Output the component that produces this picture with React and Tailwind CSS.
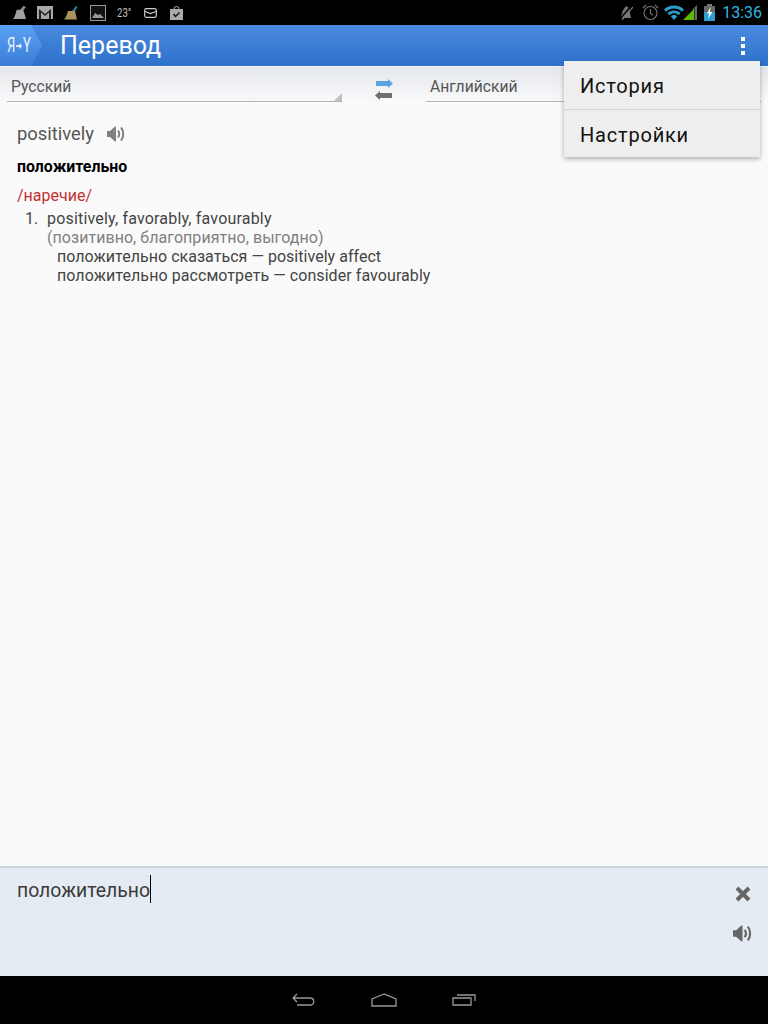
import React from 'react';

function Speaker({ className }) {
  return (
    <svg viewBox="0 0 18 16" className={className} fill="none">
      <path d="M0 5h3l5-4.500h1v15H8L3 11H0z" fill="currentColor" />
      <path d="M11 4.500c1.500 2 1.500 5 0 7" stroke="currentColor" strokeWidth="2" />
      <path d="M14 1.500c3 3.500 3 9.500 0 13" stroke="currentColor" strokeWidth="2" />
    </svg>
  );
}

function StatusBar() {
  return (
    <div className="h-[25px] bg-black flex items-center justify-between shrink-0">
      <div className="flex items-center">
        {/* broom gris */}
        <svg viewBox="0 0 16 16" className="w-[15px] h-[15px] ml-[12px]">
          <path d="M8 6l4-5 3 1-4 5z" fill="#8a8a8a" />
          <path d="M5 5h7l3 10H1c2-2 3-6 4-10z" fill="#a0a0a0" />
        </svg>
        {/* gmail */}
        <svg viewBox="0 0 16 13" className="w-[16px] h-[13px] ml-[10px]">
          <rect width="16" height="13" fill="#a8a8a8" />
          <path d="M2 13V3l6 5 6-5v10h-2V6.500L8 10 4 6.500V13z" fill="#222" />
        </svg>
        {/* broom */}
        <svg viewBox="0 0 16 16" className="w-[16px] h-[16px] ml-[10px]">
          <path d="M9 6l4-5 1.500 1-3 5z" fill="#2f7fa8" />
          <path d="M5 6h7l2 8.500H1c2-2 3-5 4-8.500z" fill="#a8935a" />
        </svg>
        {/* image */}
        <svg viewBox="0 0 16 16" className="w-[16px] h-[16px] ml-[11px]">
          <rect x="0.500" y="0.500" width="15" height="15" fill="#111" stroke="#999" />
          <path d="M2 13l3-5 3 2 2-1 4 4z" fill="#999" />
        </svg>
        <span className="ml-[11px] w-[15px] text-[12px] leading-none text-[#bbbbbb] scale-x-[0.8] origin-left whitespace-nowrap">23°</span>
        {/* inbox */}
        <svg viewBox="0 0 13 10" className="w-[13px] h-[10px] ml-[12px]" fill="none" stroke="#cccccc" strokeWidth="1.200">
          <rect x="0.700" y="0.700" width="11.600" height="8.600" rx="1.500" />
          <path d="M1 3.500l5.500 2 5.500-2" />
        </svg>
        {/* market */}
        <svg viewBox="0 0 13 14" className="w-[13px] h-[14px] ml-[13px]">
          <path d="M4 4V2.500a2.500 2 0 015 0V4" fill="none" stroke="#aaaaaa" />
          <rect y="3" width="13" height="11" fill="#aaaaaa" />
          <path d="M3.500 8l2 2.500 4-4" fill="none" stroke="#111" strokeWidth="1.500" />
        </svg>
      </div>
      <div className="flex items-center">
        {/* mute */}
        <svg viewBox="0 0 13 15" className="w-[13px] h-[15px]">
          <path d="M1 12l1.500-6L6 1l3 2 2 10H1z" fill="#777" />
          <path d="M0 14L12 0" stroke="#000" strokeWidth="1.500" />
          <path d="M2 15L13 2" stroke="#777" strokeWidth="1.200" />
        </svg>
        {/* alarm */}
        <svg viewBox="0 0 17 17" className="w-[17px] h-[17px] ml-[9px]" fill="none" stroke="#777" strokeWidth="1.100">
          <circle cx="8.500" cy="9" r="6.500" />
          <path d="M8.500 5v4.500l2.500 1.500M1 4l3-3M16 4l-3-3" />
        </svg>
        {/* wifi */}
        <svg viewBox="0 0 20 15" className="w-[20px] h-[15px] ml-[5px]">
          <path d="M0 4.500C5-1 15-1 20 4.500l-2 2.300C13.500 2.500 6.500 2.500 2 6.800z" fill="#2aa0cf" />
          <path d="M3.500 8C7 4.500 13 4.500 16.500 8l-2 2.200c-2.500-2.500-6.500-2.500-9 0z" fill="#2aa0cf" />
          <path d="M6.800 11.300c1.800-1.700 4.600-1.700 6.400 0L10 15z" fill="#2aa0cf" />
        </svg>
        {/* signal */}
        <svg viewBox="0 0 15 15" className="w-[15px] h-[15px] ml-[-1px]">
          <path d="M0 15L10 5v10z" fill="#5fb800" />
          <path d="M10 4l1-1v12h-1z" fill="#5fb800" />
          <path d="M11.500 2.500L14 0v15h-2.500z" fill="#666" />
        </svg>
        {/* battery */}
        <svg viewBox="0 0 11 17" className="w-[11px] h-[17px] ml-[6px]">
          <rect x="3" width="5" height="2" fill="#777" />
          <rect y="2" width="11" height="15" fill="#666" />
          <rect y="8" width="11" height="9" fill="#2a9fd0" />
          <path d="M6.500 3L3 9.500h2.200L4 15l4.500-7H6z" fill="#fff" />
        </svg>
        <span className="ml-[7px] mr-[6px] text-[16px] leading-none text-[#33b5e5]">13:36</span>
      </div>
    </div>
  );
}

function ActionBar() {
  return (
    <div className="h-[41px] shrink-0 flex items-center bg-gradient-to-b from-[#4b8ade] to-[#2c71cb] border-b border-[#f4f6f9] box-content">
      <div className="relative w-[42px] h-[41px] shrink-0">
        <svg viewBox="0 0 42 41" className="w-[42px] h-[41px]">
          <defs>
            <linearGradient id="logoFill" x1="0" y1="0" x2="0" y2="1">
              <stop offset="0" stopColor="#5aa2f5" />
              <stop offset="1" stopColor="#3a7dd6" />
            </linearGradient>
          </defs>
          <path d="M0 0h31l11 20.500L31 41H0z" fill="url(#logoFill)" />
        </svg>
        <div className="absolute left-[7px] top-[9px] flex items-center text-white/90 text-[20px] leading-[23px]">
          <span className="w-[8px] scale-x-[0.65] origin-left">Я</span>
          <svg viewBox="0 0 6 6" className="w-[6px] h-[6px] mx-[1px]">
            <path d="M0 2.200h3.500V0L6 3 3.500 6V3.800H0z" fill="#ffffff" />
          </svg>
          <span className="w-[8px] scale-x-[0.65] origin-left">Y</span>
        </div>
      </div>
      <span className="ml-[18px] text-white text-[25px]">Перевод</span>
      <div className="ml-auto mr-[23px] flex flex-col gap-[3px]">
        <div className="w-[4px] h-[4px] bg-white" />
        <div className="w-[4px] h-[4px] bg-white" />
        <div className="w-[4px] h-[4px] bg-white" />
      </div>
    </div>
  );
}

function LanguageRow() {
  return (
    <div className="h-[35px] shrink-0 flex bg-gradient-to-b from-[#e4e7ec] to-[#f9f9fa]">
      <div className="relative ml-[7px] w-[335px] h-[35px] border-b border-[#b4b4b4] pl-[4px] pt-[10px] text-[15.7px] leading-[20px] text-[#555555]">
        Русский
        <div className="absolute right-0 bottom-0 w-0 h-0 border-l-[8px] border-b-[8px] border-l-transparent border-b-[#c0c0c0]" />
      </div>
      <svg viewBox="0 0 20 22" className="ml-[32px] mt-[12px] w-[20px] h-[22px]">
        <path d="M2 2h12V0l5 4.500L14 9V7H2z" fill="#5aa5e0" />
        <path d="M18 14H6v-2l-5 4.500L6 21v-2h12z" fill="#6e6e6e" />
      </svg>
      <div className="relative ml-[32px] flex-1 mr-[7px] h-[35px] border-b border-[#b4b4b4] pl-[4px] pt-[10px] text-[15.7px] leading-[20px] text-[#555555]">
        Английский
      </div>
    </div>
  );
}

function Translation() {
  return (
    <div className="flex-1 bg-[#fafafa] pl-[17px] pt-[20px]">
      <div className="flex items-center h-[24px]">
        <span className="text-[18.4px] leading-[24px] text-[#555555]">positively</span>
        <Speaker className="ml-[13px] w-[18px] h-[16px] text-[#808080]" />
      </div>
      <div className="mt-[11px] text-[15.9px] leading-[20px] font-bold text-black">положительно</div>
      <div className="mt-[9px] text-[16px] leading-[20px] text-[#c53030]">/наречие/</div>
      <div className="mt-[3px] flex text-[16px] leading-[19px] text-[#444444]">
        <span className="ml-[8px] w-[22px] shrink-0">1.</span>
        <div>
          <div className="tracking-[0.18px]">positively, favorably, favourably</div>
          <div className="tracking-[0.05px] text-[#808080]">(позитивно, благоприятно, выгодно)</div>
          <div className="ml-[10px] tracking-[0.03px]">положительно сказаться — positively affect</div>
          <div className="ml-[10px] tracking-[0.07px]">положительно рассмотреть — consider favourably</div>
        </div>
      </div>
    </div>
  );
}

function InputPanel() {
  return (
    <div className="h-[110px] shrink-0 bg-[#e5ebf2] border-t-2 border-[#ccd6df] flex justify-between">
      <div className="pl-[17px] pt-[7px] flex h-[36px] items-start">
        <span className="text-[19.4px] leading-[32px] text-[#3a3a3a]">положительно</span>
        <div className="w-[1px] h-[28px] bg-black" />
      </div>
      <div className="flex flex-col items-center mr-[16px] pt-[18px]">
        <svg viewBox="0 0 16 16" className="w-[16px] h-[16px]">
          <path d="M2 2l12 12M14 2L2 14" stroke="#666666" strokeWidth="4" />
        </svg>
        <Speaker className="mt-[23px] w-[19px] h-[17px] text-[#666666]" />
      </div>
    </div>
  );
}

function NavBar() {
  return (
    <div className="h-[48px] shrink-0 bg-black flex items-start justify-center pt-[17px]">
      <svg viewBox="0 0 24 13" className="w-[24px] h-[13px]" fill="none" stroke="#999999" strokeWidth="1.300">
        <path d="M5 1L1 5l4 4M1 5h17c5 0 5 7 0 7h-13" />
      </svg>
      <svg viewBox="0 0 26 14" className="ml-[55px] w-[26px] h-[14px]" fill="none" stroke="#999999" strokeWidth="1.300">
        <path d="M13 1L1 6v7h24V6z" />
      </svg>
      <svg viewBox="0 0 24 13" className="ml-[55px] w-[24px] h-[13px]" fill="none" stroke="#999999" strokeWidth="1.300">
        <path d="M1 5h18v7H1zM5 2h18v6" />
      </svg>
    </div>
  );
}

export default function App() {
  return (
    <div className="relative w-[768px] h-[1024px] flex flex-col overflow-hidden font-['Roboto',sans-serif]">
      <StatusBar />
      <ActionBar />
      <LanguageRow />
      <Translation />
      <InputPanel />
      <NavBar />
      {/* menu desplegable */}
      <div className="absolute left-[564px] top-[61px] w-[196px] bg-[#eeeeee] shadow-[0_2px_5px_rgba(0,0,0,0.3)] text-[20px] text-[#111111] tracking-[0.8px]">
        <div className="h-[49px] pl-[16px] pt-[1px] flex items-center border-b border-[#d4d4d4]">История</div>
        <div className="h-[47px] pl-[16px] pt-[3px] flex items-center">Настройки</div>
      </div>
    </div>
  );
}
